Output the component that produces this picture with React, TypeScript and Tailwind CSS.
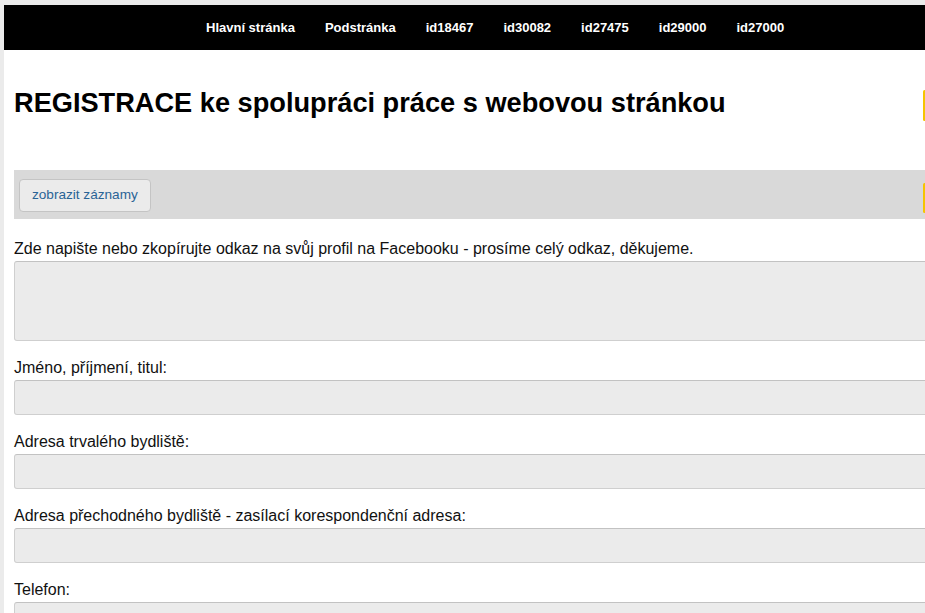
import React from "react";

const menu = ["Hlavní stránka", "Podstránka", "id18467", "id30082", "id27475", "id29000", "id27000"];

const fields = [
    "Jméno, příjmení, titul:",
    "Adresa trvalého bydliště:",
    "Adresa přechodného bydliště - zasílací korespondenční adresa:",
    "Telefon:",
];

export default function App() {
    return (
        <div
            className="w-[925px] h-[613px] overflow-hidden bg-[#ebebeb] pt-[5px] pl-[4px]"
            style={{ fontFamily: '"Liberation Sans", Arial, sans-serif' }}
        >
            <div className="w-[1000px] bg-white min-h-[700px]">
                {/* horní menu */}
                <div className="h-[45px] bg-black flex items-center pl-[202px] gap-[30px]">
                    {menu.map((m) => (
                        <span key={m} className="text-white font-bold text-[13px] whitespace-nowrap">
                            {m}
                        </span>
                    ))}
                </div>

                <div className="pl-[10px] pr-[20px]">
                    <div className="flex items-start">
                        <h1 className="flex-1 mt-[38px] text-[27.2px] leading-[30px] font-bold text-black">
                            REGISTRACE ke spolupráci práce s webovou stránkou
                        </h1>
                        <div className="w-[3px] h-[31px] mt-[40px] mr-[58px] bg-[#f5c400] rounded-sm" />
                    </div>

                    {/* lišta s tlačítkem */}
                    <div className="mt-[49px] h-[49px] bg-[#d9d9d9] flex items-center pl-[5px]">
                        <button className="h-[33px] mt-[1px] px-[12px] bg-[#ebebeb] border border-[#c4c4c4] rounded-[4px] text-[13.6px] text-[#2a6496]">
                            zobrazit záznamy
                        </button>
                        <div className="ml-auto w-[3px] h-[30px] mt-[7px] mr-[58px] bg-[#f5c400] rounded-sm" />
                    </div>

                    <div className="mt-[21px]">
                        <label className="block text-[16px] leading-[18px] text-[#111]">
                            Zde napište nebo zkopírujte odkaz na svůj profil na Facebooku - prosíme celý odkaz, děkujeme.
                        </label>
                        <textarea className="block mt-[3px] w-full h-[80px] bg-[#ebebeb] border border-[#cfcfcf] border-t-[#c2c2c2] rounded-[3px] resize-none" />
                    </div>

                    {fields.map((f) => (
                        <div key={f} className="mt-[18px]">
                            <label className="block text-[16px] leading-[18px] text-[#111]">{f}</label>
                            <input
                                type="text"
                                className="block mt-[3px] w-full h-[35px] bg-[#ebebeb] border border-[#cfcfcf] border-t-[#c2c2c2] rounded-[3px]"
                            />
                        </div>
                    ))}
                </div>
            </div>
        </div>
    );
}
